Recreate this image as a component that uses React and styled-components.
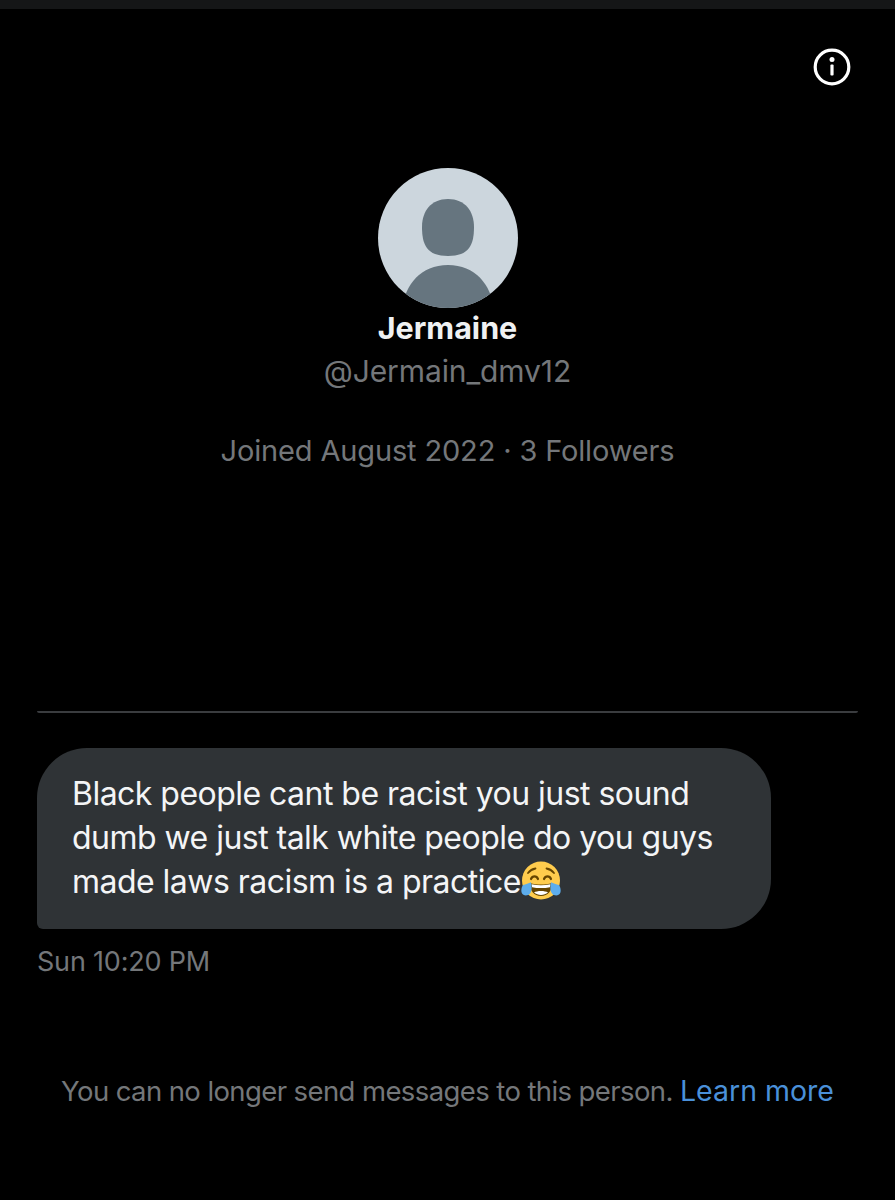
import React from "react";
import styled, { createGlobalStyle } from "styled-components";

const Global = createGlobalStyle`
  html, body {
    margin: 0;
    padding: 0;
    background: #000;
  }
  body {
    font-family: "Inter", "Liberation Sans", sans-serif;
  }
`;

const Page = styled.div`
  width: 895px;
  height: 1200px;
  background: #000;
  overflow: hidden;
  display: flex;
  flex-direction: column;
`;

const TopStrip = styled.div`
  height: 9px;
  background: #151617;
  flex: none;
`;

const InfoRow = styled.div`
  display: flex;
  justify-content: flex-end;
  padding: 39px 44px 0 0;
  height: 81px;
  flex: none;
  box-sizing: border-box;
`;

const Profile = styled.div`
  display: flex;
  flex-direction: column;
  align-items: center;
  padding-top: 78px;
  height: 621px;
  flex: none;
  box-sizing: border-box;
`;

const Avatar = styled.svg`
  width: 140px;
  height: 140px;
  display: block;
`;

const Name = styled.div`
  margin-top: 3px;
  font-size: 30.5px;
  line-height: 34px;
  font-weight: 700;
  color: #eff1f2;
`;

const Handle = styled.div`
  margin-top: 8px;
  font-size: 30px;
  line-height: 36px;
  letter-spacing: -0.1px;
  color: #74777a;
`;

const Meta = styled.div`
  margin-top: 44px;
  font-size: 29px;
  line-height: 36px;
  letter-spacing: -0.15px;
  color: #74777a;
`;

const Divider = styled.div`
  height: 2px;
  margin: 0 37px;
  background: #3a3c3f;
  border-radius: 0 0 2px 2px;
  flex: none;
`;

const Thread = styled.div`
  padding: 35px 37px 0;
  display: flex;
  flex-direction: column;
  align-items: flex-start;
`;

const Bubble = styled.div`
  width: 734px;
  height: 181px;
  box-sizing: border-box;
  padding: 24px 30px 0 35px;
  background: #2f3336;
  border-radius: 50px 50px 50px 6px;
  color: #f4f5f6;
  font-size: 32px;
  line-height: 44px;
  letter-spacing: -0.53px;
`;

const BubbleLine = styled.div`
  white-space: nowrap;
  display: flex;
  align-items: center;
`;

const Time = styled.div`
  margin-top: 15px;
  font-size: 27px;
  line-height: 36px;
  letter-spacing: -0.2px;
  color: #74777a;
`;

const Notice = styled.div`
  margin-top: 93px;
  text-align: center;
  font-size: 27.5px;
  line-height: 36px;
  letter-spacing: -0.6px;
  white-space: nowrap;
  color: #74777a;
`;

const Learn = styled.span`
  font-size: 28.5px;
  letter-spacing: 0;
  color: #4a90d9;
`;

const InfoIcon = () => (
  <svg width="38" height="38" viewBox="0 0 38 38" fill="none">
    <circle cx="19" cy="19" r="16.8" stroke="#fff" strokeWidth="3.2" />
    <circle cx="19" cy="11.6" r="2.5" fill="#fff" />
    <rect x="17.4" y="16.6" width="3.2" height="11" rx="1" fill="#fff" />
  </svg>
);

const AvatarIcon = () => (
  <Avatar viewBox="0 0 140 140">
    <defs>
      <clipPath id="avatar-clip">
        <circle cx="70" cy="70" r="70" />
      </clipPath>
    </defs>
    <circle cx="70" cy="70" r="70" fill="#ccd6dd" />
    <path
      d="M70 31c17 0 26 12 26 28 0 18-5 29-26 29s-26-11-26-29c0-16 9-28 26-28z"
      fill="#66757f"
    />
    <path
      d="M70 97c-30 0-46 24-46 50h92c0-26-16-50-46-50z"
      fill="#66757f"
      clipPath="url(#avatar-clip)"
    />
  </Avatar>
);

const LaughEmoji = () => (
  <svg
    width="40"
    height="40"
    viewBox="0 0 40 40"
    style={{ flex: "none", marginTop: -2 }}
  >
    <circle cx="20" cy="19.5" r="19" fill="#ffcc4d" />
    <path
      d="M7 12c2-2.500 4.500-4 7.500-4.500M33 12c-2-2.500-4.500-4-7.500-4.500"
      fill="none"
      stroke="#664500"
      strokeWidth="1.800"
      strokeLinecap="round"
    />
    <path
      d="M10 18c1.500-3.500 5.500-3.500 7 0M23 18c1.500-3.500 5.500-3.500 7 0"
      fill="none"
      stroke="#664500"
      strokeWidth="2.200"
      strokeLinecap="round"
    />
    <path d="M9 22c7 2 15 2 22 0 0 8-4 13-11 13S9 30 9 22z" fill="#664500" />
    <path d="M10.500 23.200c6 1.500 13 1.500 19 0l-.6 3c-5.500 1.200-12.300 1.200-17.800 0z" fill="#fff" />
    <path d="M13 31.500c4 3.200 10 3.200 14 0-3-2-11-2-14 0z" fill="#fff" />
    <path d="M2 24c2.500-.5 6-1.800 8-2.800 1 4.800 1 8.800-1 11.300-2.500 3-7 2.500-8.300-.8-.8-2.200-.2-5.700 1.300-7.700z" fill="#5dadec" />
    <path d="M38 24c-2.500-.5-6-1.800-8-2.800-1 4.800-1 8.800 1 11.300 2.500 3 7 2.500 8.300-.8.800-2.200.2-5.700-1.300-7.700z" fill="#5dadec" />
  </svg>
);

const App = () => (
  <Page>
    <Global />
    <TopStrip />
    <InfoRow>
      <InfoIcon />
    </InfoRow>
    <Profile>
      <AvatarIcon />
      <Name>Jermaine</Name>
      <Handle>@Jermain_dmv12</Handle>
      <Meta>Joined August 2022 · 3 Followers</Meta>
    </Profile>
    <Divider />
    <Thread>
      <Bubble>
        <BubbleLine>Black people cant be racist you just sound</BubbleLine>
        <BubbleLine>dumb we just talk white people do you guys</BubbleLine>
        <BubbleLine>
          made laws racism is a practice
          <LaughEmoji />
        </BubbleLine>
      </Bubble>
      <Time>Sun 10:20 PM</Time>
    </Thread>
    <Notice>
      You can no longer send messages to this person. <Learn>Learn more</Learn>
    </Notice>
  </Page>
);

export default App;
